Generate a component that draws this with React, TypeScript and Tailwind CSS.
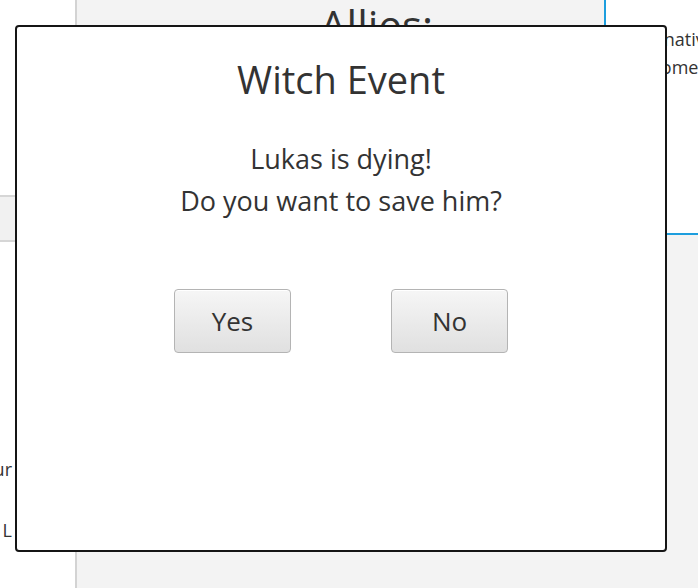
import React from 'react';

const font = { fontFamily: '"Open Sans", "Noto Sans", sans-serif' };

const DialogButton = ({ label }: { label: string }) => (
  <button className="w-[117px] h-[64px] rounded-[4px] border border-[#b4b4b4] bg-gradient-to-b from-[#f6f6f6] to-[#e0e0e0] text-[26px] text-[#333] leading-none shadow-[inset_0_1px_0_#ffffff]">
    {label}
  </button>
);

export default function App() {
  return (
    <div className="relative w-[698px] h-[588px] overflow-hidden flex bg-white text-[#333]" style={font}>
      {/* left column, mostly hidden behind the dialog */}
      <div className="w-[75px] shrink-0 flex flex-col bg-white overflow-hidden">
        <div className="h-[195px]" />
        <div className="h-[47px] bg-[#f1f1f1] border-y-2 border-[#d6d6d6]" />
        <div className="mt-[214px] flex justify-end pr-[63px] text-[18px] whitespace-nowrap">Your</div>
        <div className="mt-[34px] flex justify-end pr-[63px] text-[18px] whitespace-nowrap">L</div>
      </div>

      {/* main area */}
      <div className="flex-1 flex flex-col border-l-2 border-[#d3d3d3] bg-[#f3f3f3]">
        <div className="h-[235px] flex">
          <div className="flex-1 flex pl-[243px]">
            <div className="text-[42px] leading-none mt-[4px] whitespace-nowrap">Allies:</div>
          </div>
          <div className="w-[94px] bg-white border-l-2 border-b-2 border-[#1d9ede] pt-[25px] pl-[60px] overflow-hidden whitespace-nowrap text-[18px] leading-[28px]">
            <div className="-ml-[42px]">Alternative</div>
            <div className="-ml-[15px]">Somewhere</div>
          </div>
        </div>
        <div className="flex-1" />
      </div>

      {/* modal dialog */}
      <div className="absolute left-[15px] top-[25px] w-[652px] h-[527px] bg-white border-2 border-[#151515] rounded-[4px] flex flex-col items-center">
        <div className="mt-[33px] text-[38px] leading-none">Witch Event</div>
        <div className="mt-[40px] text-[27px] leading-[42px] text-center">
          <div>Lukas is dying!</div>
          <div>Do you want to save him?</div>
        </div>
        <div className="mt-[67px] flex gap-[100px]">
          <DialogButton label="Yes" />
          <DialogButton label="No" />
        </div>
      </div>
    </div>
  );
}
